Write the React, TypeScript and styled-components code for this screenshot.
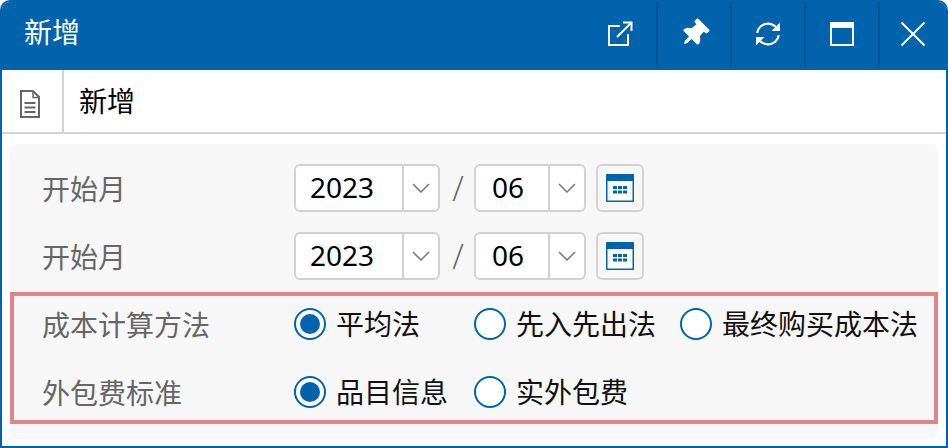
import { FC, ReactNode } from 'react';
import styled, { createGlobalStyle } from 'styled-components';
import { FaThumbtack } from 'react-icons/fa';

const BLUE = '#0063ac';
const FONT = '"Noto Sans", "Noto Sans CJK SC", sans-serif';

const GlobalStyle = createGlobalStyle`
  html, body {
    margin: 0;
    padding: 0;
    background: #ffffff;
    font-family: ${FONT};
  }
  * {
    box-sizing: border-box;
  }
`;

const ExternalIcon = () => (
  <svg width="26" height="26" viewBox="0 0 26 26" fill="none" stroke="#fff" strokeWidth="2">
    <path d="M13 5H2v19h19V13" />
    <path d="M10 16 L24 2" />
    <path d="M16 1.5h8.5V10" />
  </svg>
);

const SyncIcon = () => (
  <svg width="26" height="26" viewBox="0 0 26 26" fill="none">
    <path d="M2.2 12C3 6.5 7.4 2.6 13 2.6c3 0 5.6 1.2 7.6 3.2" stroke="#fff" strokeWidth="2.2" />
    <path d="M25 1.5V10h-8.5z" fill="#fff" />
    <path d="M23.8 14c-.8 5.5-5.2 9.4-10.8 9.4-3 0-5.6-1.2-7.6-3.2" stroke="#fff" strokeWidth="2.2" />
    <path d="M1 24.5V16h8.5z" fill="#fff" />
  </svg>
);

const WindowIcon = () => (
  <svg width="24" height="24" viewBox="0 0 24 24" fill="none" stroke="#fff">
    <rect x="1" y="1" width="22" height="22" strokeWidth="2" />
    <path d="M0 3.5h24" strokeWidth="5" />
  </svg>
);

const CloseIcon = () => (
  <svg width="26" height="26" viewBox="0 0 26 26" fill="none" stroke="#fff" strokeWidth="2">
    <path d="M1.5 1.5 24.500 24.500M24.500 1.500 1.500 24.500" />
  </svg>
);

const DocIcon = () => (
  <svg width="20" height="28" viewBox="0 0 20 28" fill="none" stroke="#666" strokeWidth="2">
    <path d="M1 1H13L19 7V27H1Z" />
    <path d="M13 1V7.500H19" strokeWidth="1.500" />
    <path d="M4.500 13H15.500M4.500 17.500H15.500M4.500 22H15.500" />
  </svg>
);

const CalendarIcon = () => (
  <svg width="28" height="28" viewBox="0 0 28 28">
    <path d="M0 1a1 1 0 0 1 1-1h26a1 1 0 0 1 1 1v26a1 1 0 0 1-1 1H1a1 1 0 0 1-1-1z" fill={BLUE} />
    <rect x="1.500" y="7" width="25" height="19.500" fill="#fff" />
    <path
      d="M7 12h4v3H7zM12 12h4v3h-4zM17 12h4v3h-4zM7 16.500h4v3H7zM12 16.500h4v3h-4zM17 16.500h4v3h-4z"
      fill={BLUE}
    />
  </svg>
);

const Chevron = () => (
  <svg width="18" height="10" viewBox="0 0 18 10" fill="none" stroke="#777" strokeWidth="1.500">
    <path d="M1 1 9 9 17 1" />
  </svg>
);

const Select: FC<{ value: string; narrow?: boolean }> = ({ value, narrow }) => (
  <SelectBox $narrow={narrow}>
    <SelectValue $narrow={narrow}>{value}</SelectValue>
    <SelectArrow>
      <Chevron />
    </SelectArrow>
  </SelectBox>
);

const DateRow: FC = () => (
  <Row>
    <Label>开始月</Label>
    <Select value="2023" />
    <Slash>/</Slash>
    <Select value="06" narrow />
    <CalendarButton type="button">
      <CalendarIcon />
    </CalendarButton>
  </Row>
);

const Radio: FC<{ checked?: boolean; children: ReactNode }> = ({ checked, children }) => (
  <RadioOption>
    <RadioCircle>{checked && <RadioDot />}</RadioCircle>
    <RadioText>{children}</RadioText>
  </RadioOption>
);

const App: FC = () => (
  <>
    <GlobalStyle />
    <Window>
      <Header>
        <Title>新增</Title>
        <HeaderButton><ExternalIcon /></HeaderButton>
        <HeaderButton><PinIcon /></HeaderButton>
        <HeaderButton><SyncIcon /></HeaderButton>
        <HeaderButton><WindowIcon /></HeaderButton>
        <HeaderButton $last><CloseIcon /></HeaderButton>
      </Header>
      <Toolbar>
        <ToolbarIcon><DocIcon /></ToolbarIcon>
        <ToolbarTitle>新增</ToolbarTitle>
      </Toolbar>
      <Panel>
        <DateRows>
          <DateRow />
          <DateRow />
        </DateRows>
        <Highlight>
          <RadioRow>
            <Label>成本计算方法</Label>
            <RadioGroup>
              <Radio checked>平均法</Radio>
              <Radio>先入先出法</Radio>
              <Radio>最终购买成本法</Radio>
            </RadioGroup>
          </RadioRow>
          <RadioRow>
            <Label>外包费标准</Label>
            <RadioGroup>
              <Radio checked>品目信息</Radio>
              <Radio>实外包费</Radio>
            </RadioGroup>
          </RadioRow>
        </Highlight>
      </Panel>
    </Window>
  </>
);

export default App;

// Styled Components
const Window = styled.div`
  width: 948px;
  height: 448px;
  display: flex;
  flex-direction: column;
  background: #ffffff;
  border: 2px solid ${BLUE};
  border-radius: 10px 10px 0 0;
  overflow: hidden;
`;

const Header = styled.div`
  height: 70px;
  margin-top: -2px;
  padding-bottom: 2px;
  flex: none;
  display: flex;
  align-items: stretch;
  background: ${BLUE};
  color: #ffffff;
`;

const Title = styled.div`
  flex: 1;
  padding-left: 22px;
  font-size: 28px;
  line-height: 64px;
`;

const HeaderButton = styled.div<{ $last?: boolean }>`
  width: ${(p) => (p.$last ? '66px' : '74px')};
  display: flex;
  align-items: center;
  justify-content: center;
  border-right: ${(p) => (p.$last ? 'none' : '2px solid #00558f')};
`;

const PinIcon = styled(FaThumbtack)`
  width: 22px;
  height: 28px;
  color: #ffffff;
  transform: rotate(45deg);
`;

const Toolbar = styled.div`
  height: 64px;
  flex: none;
  display: flex;
  align-items: stretch;
  border-bottom: 2px solid #d4d4d4;
`;

const ToolbarIcon = styled.div`
  width: 62px;
  padding: 5px 4px 0 0;
  display: flex;
  align-items: center;
  justify-content: center;
  border-right: 2px solid #d4d4d4;
`;

const ToolbarTitle = styled.div`
  padding-left: 15px;
  font-size: 28px;
  line-height: 62px;
  color: #000000;
`;

const Panel = styled.div`
  margin: 10px 8px 8px;
  flex: 1;
  padding: 20px 0 15px;
  display: flex;
  flex-direction: column;
  background: #f7f7f7;
  border-radius: 8px;
`;

const DateRows = styled.div`
  display: flex;
  flex-direction: column;
  gap: 20px;
  padding-left: 32px;
`;

const Row = styled.div`
  height: 48px;
  display: flex;
  align-items: center;
`;

const Label = styled.div`
  width: 252px;
  flex: none;
  font-size: 28px;
  color: #666666;
`;

const SelectBox = styled.div<{ $narrow?: boolean }>`
  width: ${(p) => (p.$narrow ? '112px' : '146px')};
  height: 48px;
  display: flex;
  background: #ffffff;
  border: 2px solid #d2d2d2;
  border-radius: 6px;
`;

const SelectValue = styled.div<{ $narrow?: boolean }>`
  flex: 1;
  padding-left: ${(p) => (p.$narrow ? '16px' : '14px')};
  font-size: 28px;
  line-height: 42px;
  color: #000000;
  border-right: 2px solid #d2d2d2;
`;

const SelectArrow = styled.div`
  width: 34px;
  flex: none;
  display: flex;
  align-items: center;
  justify-content: center;
`;

const Slash = styled.div`
  width: 34px;
  padding-left: 2px;
  text-align: center;
  font-family: "Open Sans", sans-serif;
  font-size: 34px;
  font-weight: 300;
  color: #666666;
`;

const CalendarButton = styled.button`
  width: 48px;
  height: 48px;
  margin-left: 10px;
  padding: 0;
  display: flex;
  align-items: center;
  justify-content: center;
  background: #f7f7f7;
  border: 2px solid #d2d2d2;
  border-radius: 6px;
`;

const Highlight = styled.div`
  margin-top: 12px;
  padding: 4px 0 4px 28px;
  display: flex;
  flex-direction: column;
  gap: 20px;
  border: 4px solid #e0838b;
`;

const RadioRow = styled(Row)``;

const RadioGroup = styled.div`
  display: grid;
  grid-template-columns: 180px 206px auto;
  align-items: center;
`;

const RadioOption = styled.label`
  display: flex;
  align-items: center;
  gap: 10px;
  font-size: 28px;
  color: #111111;
  white-space: nowrap;
`;

const RadioText = styled.span`
  margin-bottom: 2px;
`;

const RadioCircle = styled.span`
  width: 32px;
  height: 32px;
  flex: none;
  display: flex;
  align-items: center;
  justify-content: center;
  background: #ffffff;
  border: 2px solid ${BLUE};
  border-radius: 50%;
`;

const RadioDot = styled.span`
  width: 20px;
  height: 20px;
  background: ${BLUE};
  border-radius: 50%;
`;
